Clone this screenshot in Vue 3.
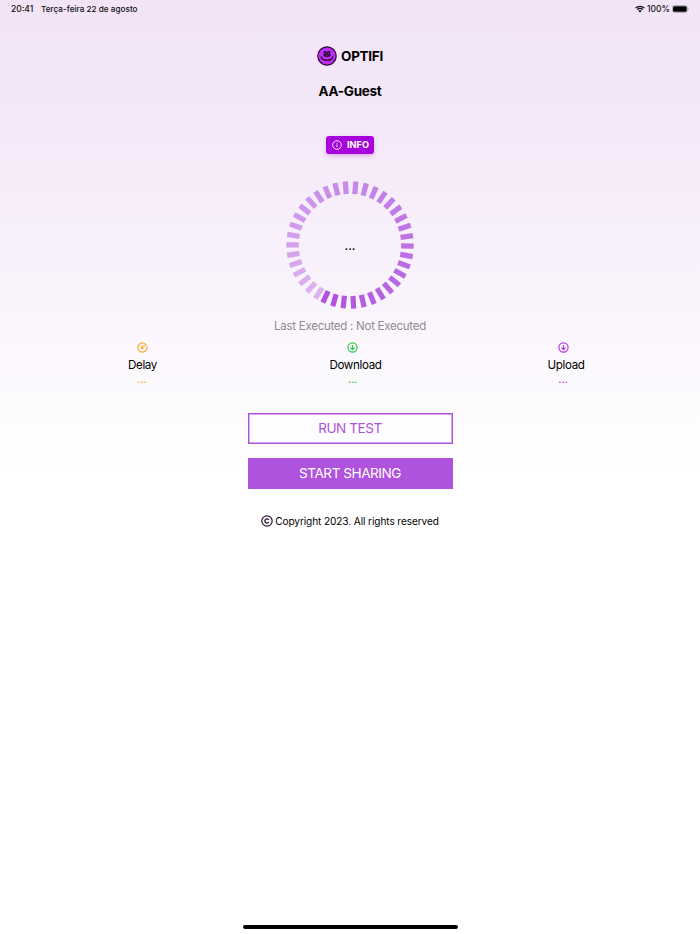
<template>
  <div class="screen">
    <header class="status-bar">
      <div class="status-left">
        <span class="time">20:41</span>
        <span class="date">Terça-feira 22 de agosto</span>
      </div>
      <div class="status-right">
        <svg class="wifi" viewBox="0 0 20 15">
          <path d="M1.2 5.6a12.6 12.6 0 0 1 17.6 0M4.3 8.8a8.2 8.2 0 0 1 11.4 0" fill="none" stroke="#111" stroke-width="2.5" />
          <path d="M6.6 11a4.9 4.9 0 0 1 6.8 0L10 14.5z" fill="#111" />
        </svg>
        <span class="percent">100%</span>
        <svg class="battery" viewBox="0 0 18 8">
          <rect x="0.4" y="0.4" width="15.4" height="7.2" rx="2.2" fill="none" stroke="#a49ba8" stroke-width="0.8" />
          <rect x="1.1" y="1.1" width="14" height="5.8" rx="1.4" fill="#000" />
          <path d="M16.5 2.7c1 .3 1 2.3 0 2.6z" fill="#a49ba8" />
        </svg>
      </div>
    </header>

    <main class="content">
      <div class="brand">
        <svg class="logo" viewBox="0 0 20 20">
          <circle cx="10" cy="10" r="9.2" fill="#c02bf5" stroke="#2b0b3a" stroke-width="1.2" />
          <path d="M6.8 5.4c1-.9 2 .3 3.200.3s2.200-1.200 3.200-.3l.3 4.600c-2 1.200-5 1.200-7 0z" fill="#2b0b3a" />
          <path d="M7.900 7.300h1.500M10.600 7.300h1.500M9.300 9.200l.7-.5.7.5" fill="none" stroke="#c02bf5" stroke-width=".7" />
          <path d="M4.300 10.900c-.4 4.600 11.800 4.600 11.400 0" fill="none" stroke="#2b0b3a" stroke-width="1.4" stroke-linecap="round" />
        </svg>
        <span>OPTIFI</span>
      </div>
      <h1 class="network">AA-Guest</h1>

      <button class="info-btn">
        <svg viewBox="0 0 10 10">
          <circle cx="5" cy="5" r="4.3" fill="none" stroke="#fff" stroke-width=".9" />
          <path d="M5 4.4v2.8M5 2.6v.95" stroke="#fff" stroke-width=".9" />
        </svg>
        <span>INFO</span>
      </button>

      <div class="gauge">
        <svg viewBox="-64 -64 128 128">
          <rect
            v-for="tick in ticks"
            :key="tick.angle"
            x="-2.6"
            y="-63.7"
            width="5.2"
            height="12.6"
            fill="#af52de"
            :opacity="tick.opacity"
            :transform="`rotate(${tick.angle})`"
          />
        </svg>
        <span class="gauge-value">...</span>
      </div>
      <p class="last-run">Last Executed : Not Executed</p>

      <section class="stats">
        <div v-for="stat in stats" :key="stat.name" class="stat" :class="stat.name">
          <svg viewBox="0 0 24 24">
            <g v-if="stat.name === 'delay'" fill="none" stroke="currentColor" stroke-width="2.4">
              <path d="M17.6 4.1A9.9 9.9 0 1 0 21 8.2" />
              <path d="M11.5 13L20.5 4" />
              <circle cx="11.2" cy="13" r="2.7" fill="currentColor" stroke="none" />
              <path d="M13 7.2a5.5 5.5 0 0 0-5.8 3.8" stroke-width="1.4" />
            </g>
            <g v-else fill="none" stroke="currentColor" stroke-width="2.6">
              <circle cx="12" cy="12" r="10" />
              <path d="M12 6.5v10M7.5 12.2l4.5 4.5 4.5-4.5" />
            </g>
          </svg>
          <span class="stat-label">{{ stat.label }}</span>
          <span class="stat-value">{{ stat.value }}</span>
        </div>
      </section>

      <div class="actions">
        <button class="btn outline">RUN TEST</button>
        <button class="btn solid">START SHARING</button>
      </div>

      <footer class="copyright">
        <svg viewBox="0 0 12 12">
          <circle cx="6" cy="6" r="5.2" fill="none" stroke="#2b1238" stroke-width="1.2" />
          <path d="M7.7 4.8a2.1 2.1 0 1 0 0 2.4" fill="none" stroke="#2b1238" stroke-width="1.3" />
        </svg>
        <span>Copyright 2023. All rights reserved</span>
      </footer>
    </main>

    <div class="home-indicator"></div>
  </div>
</template>

<script setup>
const TICK_COUNT = 38;
const START_ANGLE = 213;
const STEP = 9.52;

// ticks go clockwise from the lower left and get stronger
const ticks = Array.from({ length: TICK_COUNT }, (_, i) => ({
  angle: START_ANGLE + i * STEP,
  opacity: 0.4 + (0.6 * i) / (TICK_COUNT - 1),
}));

const stats = [
  { name: 'delay', label: 'Delay', value: '...' },
  { name: 'download', label: 'Download', value: '...' },
  { name: 'upload', label: 'Upload', value: '...' },
];
</script>

<style>
body {
  margin: 0;
}
</style>

<style scoped>
.screen {
  display: flex;
  flex-direction: column;
  width: 700px;
  height: 934px;
  box-sizing: border-box;
  overflow: hidden;
  background: linear-gradient(#f2e4f6 0, #f3e7f8 100px, #fff 467px);
  font-family: Inter, 'Liberation Sans', sans-serif;
  color: #000;
}

svg {
  display: block;
  flex: none;
}

button {
  border: 0;
  font-family: inherit;
}

.status-bar {
  display: flex;
  justify-content: space-between;
  align-items: center;
  height: 17px;
  padding: 0 11px;
  font-size: 8.2px;
  font-weight: 500;
  color: #111;
}

.status-left,
.status-right {
  display: flex;
  align-items: center;
  height: 16px;
}

.time {
  width: 30px;
  font-size: 8.5px;
}

.wifi {
  width: 10px;
  height: 8px;
  margin-right: 2px;
}

.percent {
  width: 24.5px;
  font-size: 8.5px;
}

.battery {
  width: 17.5px;
  height: 8px;
}

.content {
  display: flex;
  flex-direction: column;
  align-items: center;
  flex: 1;
}

.brand {
  display: flex;
  align-items: center;
  gap: 4px;
  height: 20px;
  margin-top: 29px;
  font-size: 13.5px;
  font-weight: 700;
  letter-spacing: -0.3px;
}

.brand span {
  padding-bottom: 1px;
}

.logo {
  width: 20px;
  height: 20px;
}

.network {
  margin: 16px 0 0;
  font-size: 13.5px;
  line-height: 18px;
  font-weight: 700;
  letter-spacing: -0.3px;
}

.info-btn {
  display: flex;
  align-items: center;
  justify-content: center;
  gap: 5px;
  width: 48px;
  height: 18px;
  margin-top: 36px;
  padding: 0 0 1px 1px;
  border-radius: 3px;
  background: #a502dc;
  box-shadow: 0 2px 4px rgba(150, 0, 210, 0.25);
  color: #fff;
  font-size: 9.2px;
  font-weight: 700;
}

.info-btn svg {
  width: 10px;
  height: 10px;
}

.gauge {
  display: grid;
  place-items: center;
  margin-top: 27px;
}

.gauge > * {
  grid-area: 1 / 1;
}

.gauge svg {
  width: 128px;
  height: 128px;
}

.gauge-value {
  font-size: 12px;
  font-weight: 500;
}

.last-run {
  margin: 9px 0 0;
  font-size: 11.5px;
  line-height: 16px;
  letter-spacing: -0.26px;
  color: #8e8a94;
}

.stats {
  display: grid;
  grid-template-columns: repeat(3, 210.5px);
  width: 631.5px;
  margin-top: 7.5px;
  padding-left: 5px;
}

.stat {
  display: flex;
  flex-direction: column;
  align-items: center;
}

.stat svg {
  width: 11px;
  height: 11px;
}

.stat-label {
  margin-top: 4.5px;
  font-size: 11.6px;
  line-height: 16px;
  letter-spacing: -0.35px;
}

.stat-value {
  font-size: 10px;
  font-weight: 600;
  line-height: 13px;
}

.download .stat-label,
.upload .stat-label {
  margin-left: 6px;
}

.delay .stat-label {
  margin-left: 1px;
}

.delay svg,
.delay .stat-value {
  color: #f9a825;
}

.download svg,
.download .stat-value {
  color: #2bcb45;
}

.upload svg,
.upload .stat-value {
  color: #b338e6;
}

.actions {
  display: flex;
  flex-direction: column;
  gap: 14px;
  margin-top: 27px;
}

.btn {
  width: 205px;
  height: 31px;
  padding: 0 0 1px;
  font-size: 13.6px;
  letter-spacing: -0.48px;
}

.outline {
  box-shadow: inset 0 0 0 1.5px #af52de;
  background: #fefdff;
  color: #af52de;
}

.solid {
  background: #af52de;
  color: #fff;
}

.copyright {
  display: flex;
  align-items: center;
  gap: 2px;
  height: 16px;
  margin-top: 24px;
  font-size: 10.1px;
  letter-spacing: -0.1px;
}

.copyright svg {
  width: 12px;
  height: 12px;
}

.home-indicator {
  align-self: center;
  width: 215px;
  height: 4px;
  margin-bottom: 5px;
  border-radius: 2px;
  background: #000;
}
</style>
